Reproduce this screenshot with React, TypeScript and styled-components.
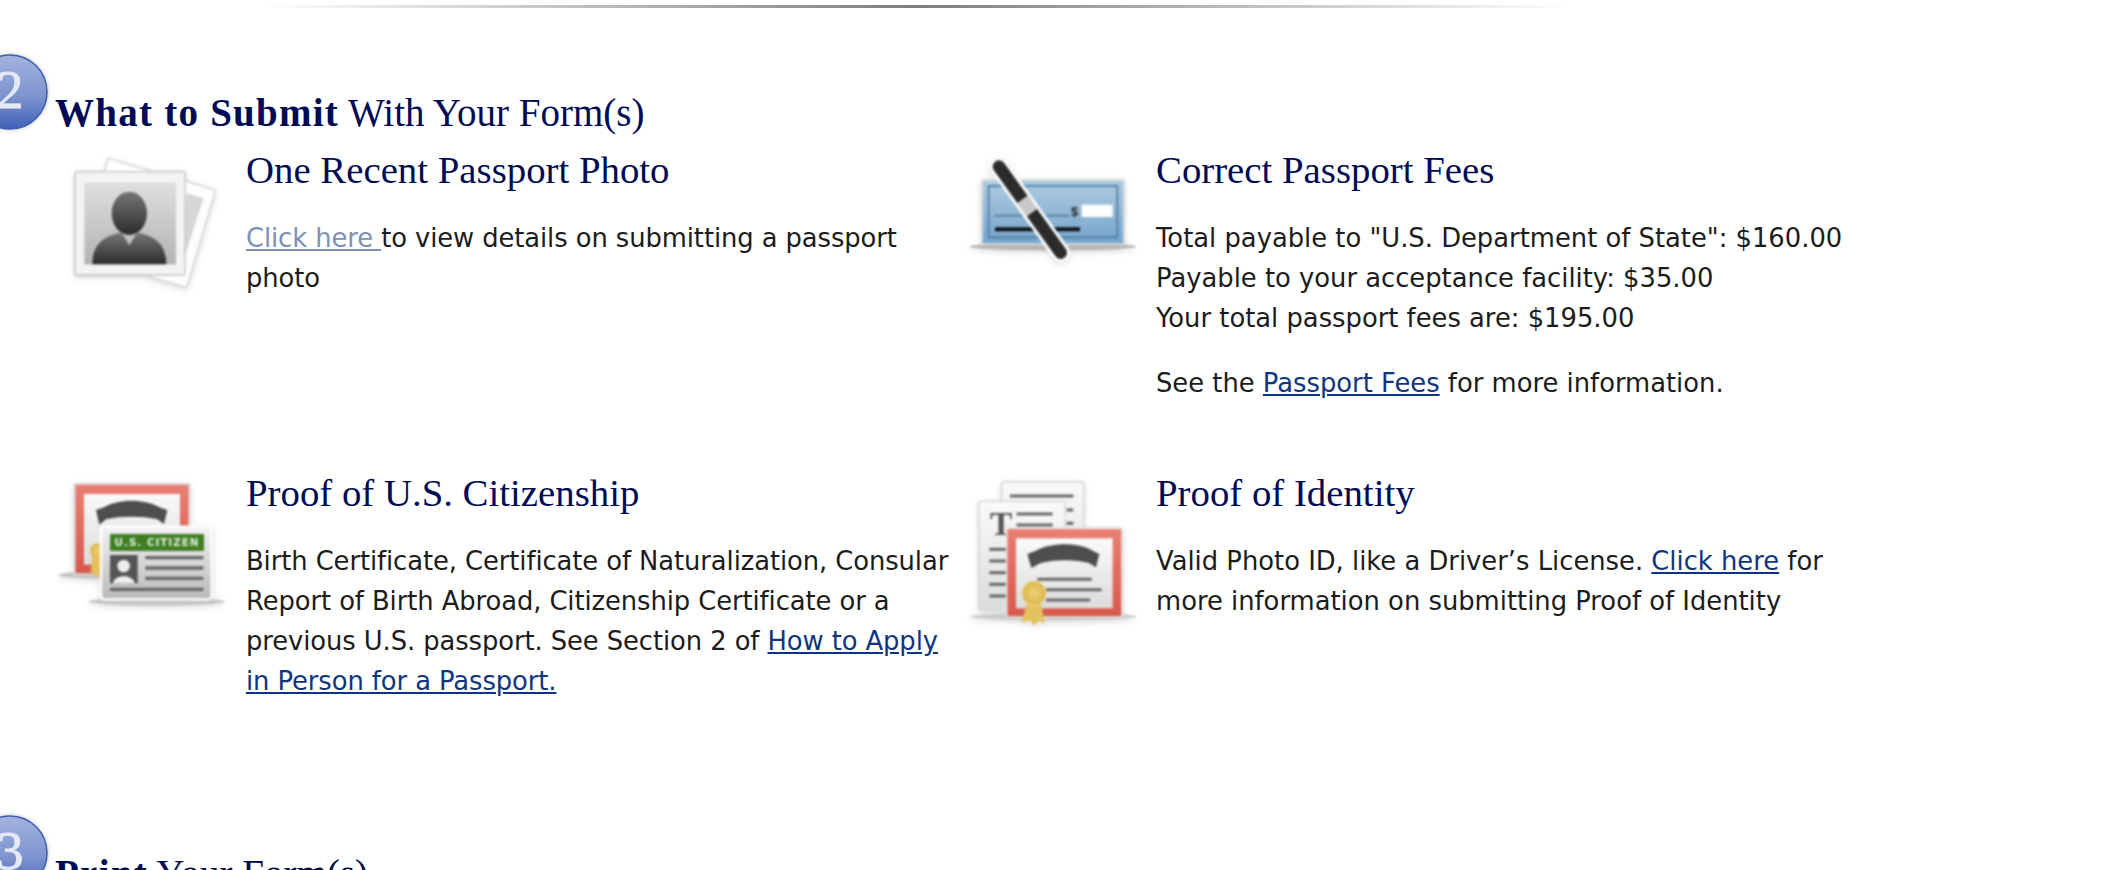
import React from "react";
import styled, { createGlobalStyle } from "styled-components";

const GlobalStyle = createGlobalStyle`
  html, body {
    margin: 0;
    padding: 0;
    background: #fff;
    overflow: hidden;
  }
`;

function SvgDefs() {
  return (
    <svg width="0" height="0" style={{ position: "absolute" }}>
      <defs>
        <linearGradient id="photoBg" x1="0" y1="0" x2="0" y2="1">
          <stop offset="0" stopColor="#dedfdf" />
          <stop offset="1" stopColor="#b2b3b4" />
        </linearGradient>
        <linearGradient id="dark" x1="0" y1="0" x2="0" y2="1">
          <stop offset="0" stopColor="#777" />
          <stop offset="1" stopColor="#2b2b2b" />
        </linearGradient>
        <linearGradient id="checkBg" x1="0" y1="0" x2="0" y2="1">
          <stop offset="0" stopColor="#b0cbe0" />
          <stop offset="1" stopColor="#74a4cb" />
        </linearGradient>
        <linearGradient id="certRed" x1="0" y1="0" x2="0" y2="1">
          <stop offset="0" stopColor="#ea7f74" />
          <stop offset="1" stopColor="#d8574b" />
        </linearGradient>
        <linearGradient id="cardBg" x1="0" y1="0" x2="0" y2="1">
          <stop offset="0" stopColor="#f3f3f3" />
          <stop offset="1" stopColor="#b9b9b9" />
        </linearGradient>
        <linearGradient id="paper" x1="0" y1="0" x2="0" y2="1">
          <stop offset="0" stopColor="#fafafa" />
          <stop offset="1" stopColor="#dcdcdc" />
        </linearGradient>
        <linearGradient id="badgeBg" x1="0" y1="0" x2="0" y2="1">
          <stop offset="0" stopColor="#a3b3de" />
          <stop offset="0.55" stopColor="#7f95d0" />
          <stop offset="1" stopColor="#3f60b6" />
        </linearGradient>
        <radialGradient id="seal">
          <stop offset="0" stopColor="#ecd27c" />
          <stop offset="1" stopColor="#dcb548" />
        </radialGradient>
      </defs>
    </svg>
  );
}

function PhotoIcon() {
  return (
    <IconSvg viewBox="0 0 600 510">
      <path d="M205 85 L527 180 L440 472 L120 380 Z" fill="#fdfdfd" stroke="#d4d4d4" strokeWidth="4" />
      <path d="M440 190 L490 205 L425 410 L430 300 Z" fill="#d5d6d7" />
      <rect x="105" y="125" width="330" height="310" rx="3" fill="#f3f3f3" stroke="#c4c4c4" strokeWidth="4" />
      <rect x="133" y="157" width="275" height="246" fill="url(#photoBg)" />
      <ellipse cx="268" cy="250" rx="53" ry="65" fill="url(#dark)" />
      <path d="M157 403 C157 345 190 316 245 308 L268 346 L291 308 C346 316 379 345 379 403 Z" fill="url(#dark)" />
    </IconSvg>
  );
}

function CheckIcon() {
  return (
    <IconSvg viewBox="0 0 600 510">
      <ellipse cx="308" cy="350" rx="250" ry="11" fill="#b5b5b5" />
      <rect x="96" y="150" width="426" height="192" fill="url(#checkBg)" stroke="#dedede" strokeWidth="5" />
      <rect x="116" y="168" width="386" height="154" fill="none" stroke="#4b7ba3" strokeWidth="5" />
      <line x1="133" y1="257" x2="358" y2="257" stroke="#4a6c8a" strokeWidth="4" />
      <text x="363" y="258" fontFamily="'Liberation Sans', sans-serif" fontWeight="700" fontSize="38" fill="#222">$</text>
      <rect x="395" y="224" width="93" height="37" fill="#fff" />
      <line x1="135" y1="298" x2="390" y2="298" stroke="#111" strokeWidth="12" />
      <line x1="147" y1="110" x2="332" y2="368" stroke="#fff" strokeWidth="56" strokeLinecap="round" />
      <line x1="147" y1="110" x2="332" y2="368" stroke="#2b2b2b" strokeWidth="38" strokeLinecap="round" />
      <line x1="217" y1="208" x2="246" y2="248" stroke="#c9c9c9" strokeWidth="40" />
    </IconSvg>
  );
}

function Ribbon({ d }: { d: string }) {
  return <path d={d} fill="#4e4e4e" />;
}

function CitizenIcon() {
  return (
    <IconSvg $drop viewBox="0 0 600 510">
      <ellipse cx="200" cy="345" rx="145" ry="11" fill="#c4c4c4" />
      <ellipse cx="350" cy="425" rx="205" ry="11" fill="#c4c4c4" />
      <rect x="104" y="72" width="344" height="270" fill="url(#certRed)" stroke="#dcdcdc" strokeWidth="5" />
      <rect x="132" y="102" width="288" height="212" fill="url(#paper)" />
      <Ribbon d="M168 150 L192 142 C235 116 315 116 358 142 L382 150 L372 192 L352 178 C310 168 240 168 198 178 L178 194 Z" />
      <circle cx="172" cy="272" r="22" fill="url(#seal)" />
      <path d="M156 288 L152 350 L165 340 L178 356 L186 288 Z" fill="#e2c05c" />
      <rect x="183" y="200" width="332" height="218" rx="10" fill="url(#cardBg)" stroke="#fff" strokeWidth="7" />
      <rect x="210" y="222" width="282" height="51" rx="3" fill="#3f7e23" />
      <text x="351" y="259" textAnchor="middle" fontFamily="'DejaVu Sans', sans-serif" fontWeight="700" fontSize="31" letterSpacing="3" fill="#e3eedd">U.S. CITIZEN</text>
      <rect x="210" y="285" width="83" height="85" fill="#555" />
      <circle cx="251" cy="318" r="19" fill="#eee" />
      <path d="M219 370 C222 342 280 342 284 370 Z" fill="#eee" />
      <line x1="316" y1="293" x2="490" y2="293" stroke="#666" strokeWidth="10" />
      <line x1="316" y1="324" x2="490" y2="324" stroke="#666" strokeWidth="10" />
      <line x1="316" y1="355" x2="490" y2="355" stroke="#666" strokeWidth="10" />
      <line x1="210" y1="388" x2="490" y2="388" stroke="#666" strokeWidth="10" />
    </IconSvg>
  );
}

function IdentityIcon() {
  return (
    <IconSvg $drop viewBox="0 0 600 510">
      <ellipse cx="310" cy="470" rx="250" ry="11" fill="#cacaca" />
      <rect x="155" y="66" width="246" height="304" rx="8" fill="url(#paper)" stroke="#d6d6d6" strokeWidth="4" />
      <line x1="180" y1="108" x2="370" y2="108" stroke="#666" strokeWidth="9" />
      <line x1="350" y1="150" x2="370" y2="150" stroke="#666" strokeWidth="9" />
      <line x1="350" y1="190" x2="370" y2="190" stroke="#666" strokeWidth="9" />
      <rect x="87" y="124" width="258" height="326" rx="8" fill="url(#paper)" stroke="#d6d6d6" strokeWidth="4" />
      <text x="120" y="226" fontFamily="'Liberation Serif', serif" fontWeight="700" fontSize="100" fill="#555">T</text>
      <line x1="200" y1="162" x2="308" y2="162" stroke="#666" strokeWidth="9" />
      <line x1="200" y1="195" x2="308" y2="195" stroke="#666" strokeWidth="9" />
      <line x1="118" y1="268" x2="180" y2="268" stroke="#666" strokeWidth="9" />
      <line x1="118" y1="303" x2="180" y2="303" stroke="#666" strokeWidth="9" />
      <line x1="118" y1="338" x2="180" y2="338" stroke="#666" strokeWidth="9" />
      <line x1="118" y1="373" x2="180" y2="373" stroke="#666" strokeWidth="9" />
      <line x1="118" y1="408" x2="180" y2="408" stroke="#666" strokeWidth="9" />
      <rect x="170" y="205" width="346" height="266" fill="url(#certRed)" stroke="#e4e4e4" strokeWidth="5" />
      <rect x="198" y="235" width="290" height="210" fill="url(#paper)" />
      <Ribbon d="M232 282 L258 272 C300 246 390 246 428 272 L448 282 L438 322 L418 310 C380 298 310 298 270 310 L244 324 Z" />
      <line x1="262" y1="358" x2="425" y2="358" stroke="#666" strokeWidth="9" />
      <line x1="288" y1="389" x2="455" y2="389" stroke="#666" strokeWidth="9" />
      <line x1="288" y1="420" x2="420" y2="420" stroke="#666" strokeWidth="9" />
      <path d="M232 420 L216 490 L240 480 L252 498 L266 480 L284 492 L272 420 Z" fill="#e4c35e" />
      <circle cx="252" cy="400" r="36" fill="url(#seal)" stroke="#eedb95" strokeWidth="3" />
    </IconSvg>
  );
}

function NumberBadge({ value }: { value: number }) {
  return (
    <BadgeSvg viewBox="0 0 76 76">
      <circle cx="38" cy="38" r="37" fill="url(#badgeBg)" stroke="#3f5db0" strokeWidth="1.5" />
      <text x="38" y="54" textAnchor="middle" fontFamily="'Liberation Serif', serif" fontSize="54" stroke="#e4e9f6" strokeWidth="0.8" fill="#e4e9f6">
        {value}
      </text>
    </BadgeSvg>
  );
}

function App() {
  return (
    <Page>
      <GlobalStyle />
      <SvgDefs />
      <Divider />
      <Section>
        <NumberBadge value={2} />
        <Heading>
          <strong>What to Submit</strong> With Your Form(s)
        </Heading>
        <Grid>
          <Cell>
            <PhotoIcon />
            <Body>
              <Title>One Recent Passport Photo</Title>
              <Para $tight>
                <VisitedLink href="#">Click here </VisitedLink>to view details on submitting a passport
                photo
              </Para>
            </Body>
          </Cell>
          <Cell>
            <CheckIcon />
            <Body>
              <Title>Correct Passport Fees</Title>
              <Para>
                Total payable to "U.S. Department of State": $160.00
                <br />
                Payable to your acceptance facility: $35.00
                <br />
                Your total passport fees are: $195.00
              </Para>
              <Para>
                See the <TextLink href="#">Passport Fees</TextLink> for more information.
              </Para>
            </Body>
          </Cell>
          <Cell>
            <CitizenIcon />
            <Body>
              <Title>Proof of U.S. Citizenship</Title>
              <Para $tight>
                Birth Certificate, Certificate of Naturalization, Consular Report of Birth Abroad,
                Citizenship Certificate or a previous U.S. passport. See Section 2 of{" "}
                <TextLink href="#">How to Apply in Person for a Passport.</TextLink>
              </Para>
            </Body>
          </Cell>
          <Cell>
            <IdentityIcon />
            <Body>
              <Title>Proof of Identity</Title>
              <Para>
                Valid Photo ID, like a Driver’s License. <TextLink href="#">Click here</TextLink> for
                more information on submitting Proof of Identity
              </Para>
            </Body>
          </Cell>
        </Grid>
      </Section>
      <Section>
        <NumberBadge value={3} />
        <Heading>
          <strong>Print</strong> Your Form(s)
        </Heading>
      </Section>
    </Page>
  );
}

const Page = styled("div")`
  width: 2120px;
  height: 870px;
  overflow: hidden;
  padding-top: 5px;
  box-sizing: border-box;
`;

const Divider = styled("div")`
  width: 1312px;
  height: 3px;
  margin: 0 0 46px 260px;
  background: linear-gradient(to right, #ffffff, #7d7d7d 50%, #ffffff);
`;

const Section = styled("section")`
  position: relative;
  margin-bottom: 39px;
`;

const BadgeSvg = styled("svg")`
  position: absolute;
  left: -28px;
  top: 0;
  width: 76px;
  height: 76px;
  filter: drop-shadow(0 0 2px rgba(0, 0, 0, 0.25));
`;

const Heading = styled("h2")`
  margin: 0;
  padding: 40px 0 0 55px;
  height: 36px;
  font-family: "Liberation Serif", serif;
  font-size: 39px;
  line-height: 38px;
  font-weight: 400;
  color: #000b55;

  strong {
    letter-spacing: 1.25px;
  }
`;

const Grid = styled("div")`
  display: grid;
  grid-template-columns: 910px 910px;
  grid-auto-rows: 323px;
  margin-left: 40px;
`;

const Cell = styled("div")`
  display: flex;
  gap: 6px;
  align-items: flex-start;
`;

const IconSvg = styled("svg")<{ $drop?: boolean }>`
  flex: none;
  width: 200px;
  height: 170px;
  margin-top: ${(props) => (props.$drop ? "7px" : "0")};
  filter: blur(0.8px) drop-shadow(0 2px 3px rgba(0, 0, 0, 0.15));
`;

const Body = styled("div")`
  width: 704px;
  padding-top: 18px;
`;

const Title = styled("h3")`
  margin: 0 0 26px;
  font-family: "Liberation Serif", serif;
  font-size: 38.8px;
  line-height: 44px;
  font-weight: 400;
  color: #000b55;
`;

const Para = styled("p")<{ $tight?: boolean }>`
  margin: 0 0 25px;
  font-family: "DejaVu Sans", sans-serif;
  font-size: 25.8px;
  line-height: 40px;
  letter-spacing: ${(props) => (props.$tight ? "-0.08px" : "normal")};
  color: #1c1c1c;
`;

const TextLink = styled("a")`
  color: #0f3580;
  text-decoration: underline;
`;

const VisitedLink = styled(TextLink)`
  color: #7e90b6;
`;

export default App;
